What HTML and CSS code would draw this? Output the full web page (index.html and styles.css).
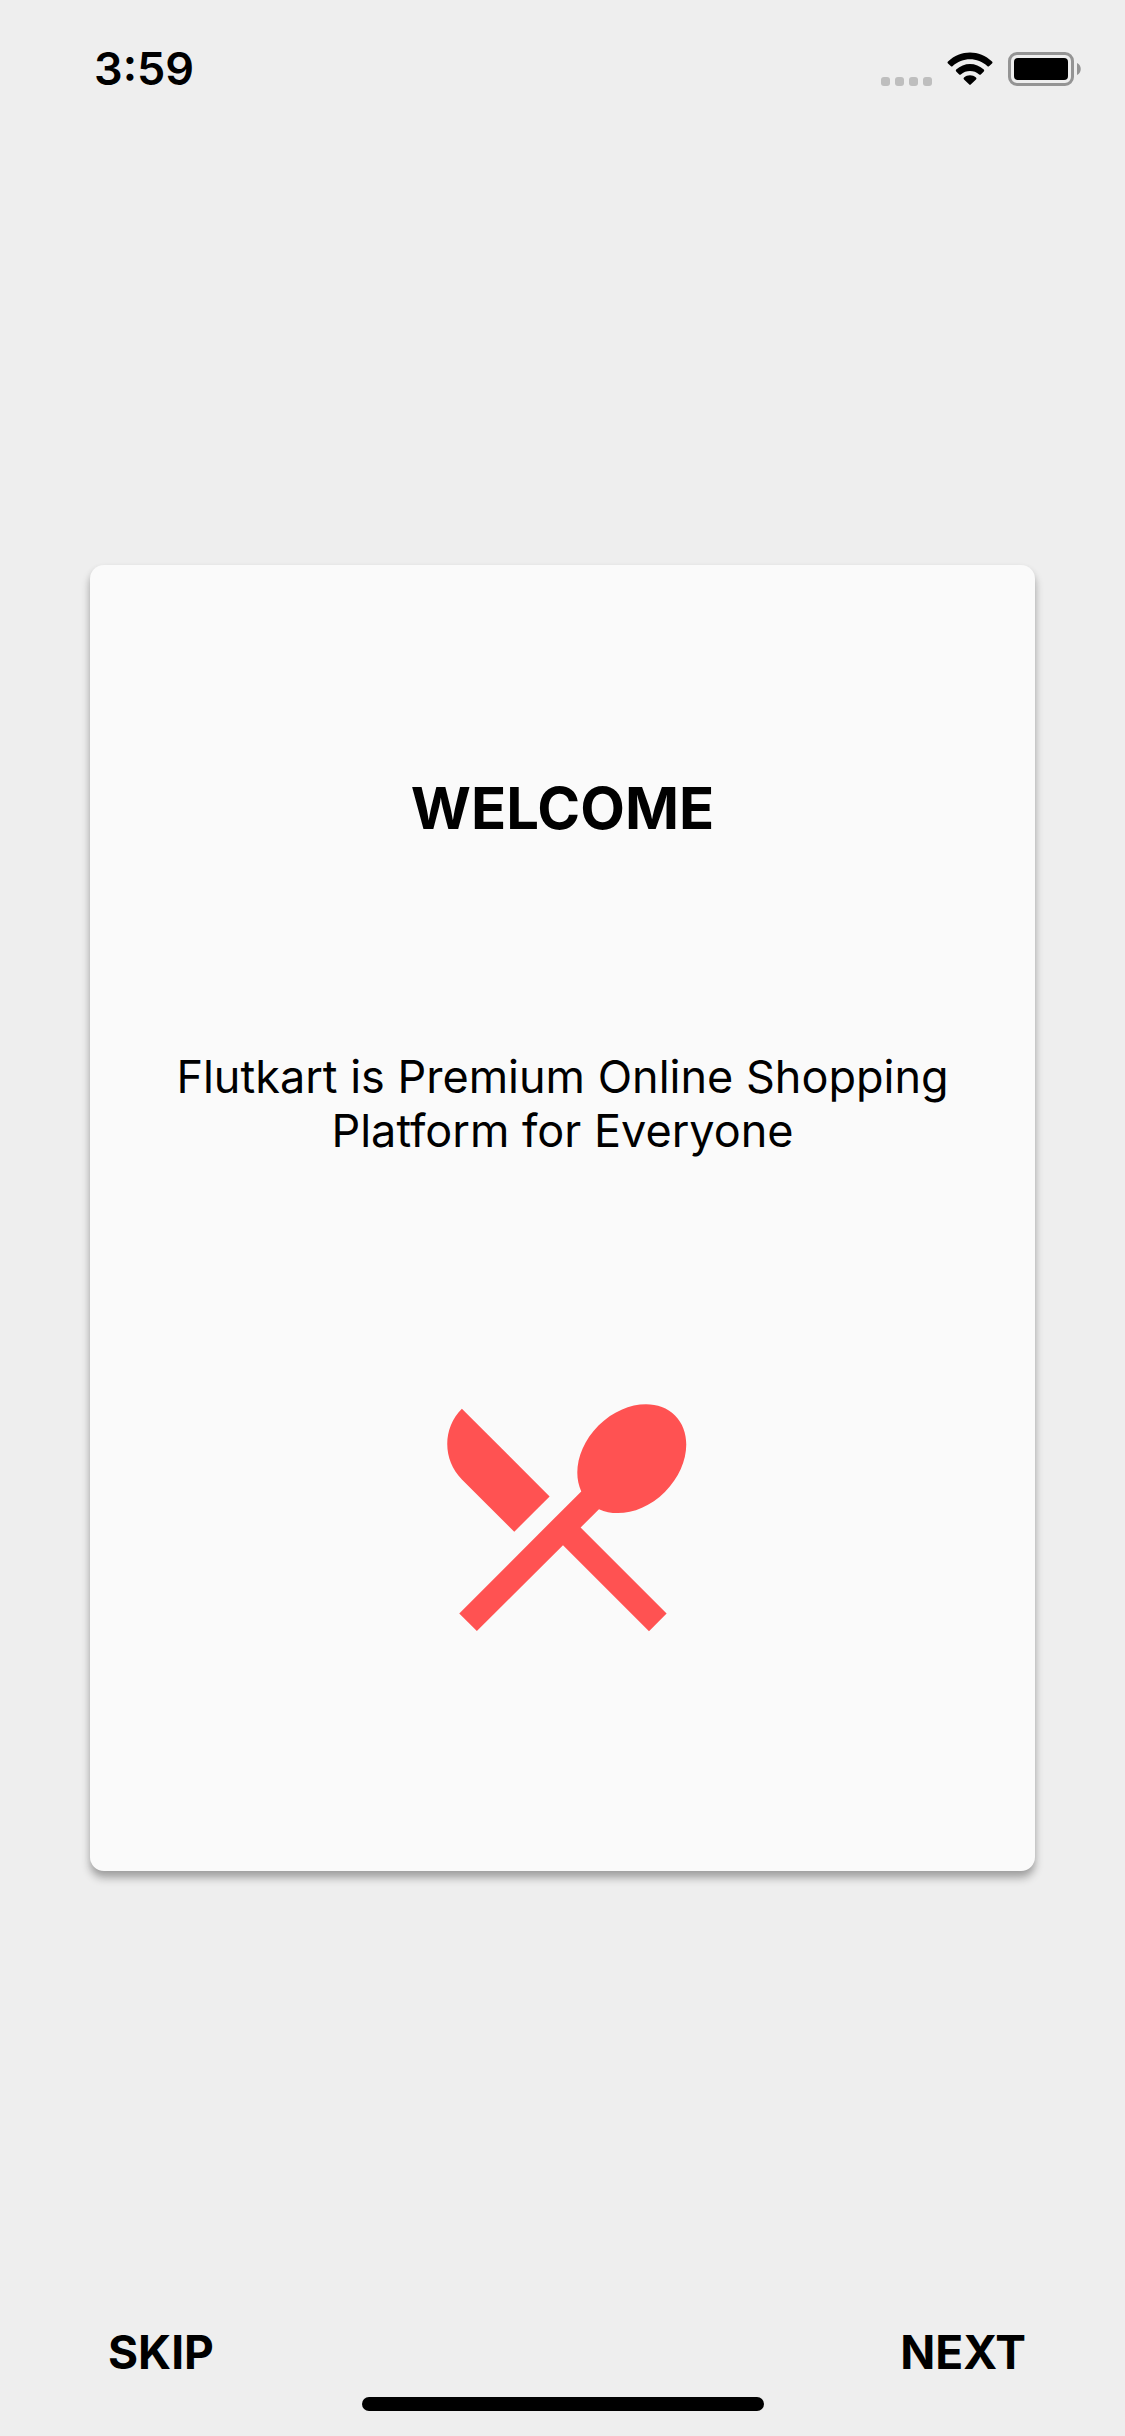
FILE: index.html
```html
<!DOCTYPE html>
<html lang="en">
<head>
<meta charset="utf-8">
<meta name="viewport" content="width=device-width, initial-scale=1">
<title>Flutkart</title>
<link rel="stylesheet" href="styles.css">
</head>
<body class="screen">
  <header class="status-bar">
    <time class="clock">3:59</time>
    <div class="indicators">
      <svg class="signal" viewBox="0 0 51 9" aria-hidden="true">
        <rect width="9" height="9" rx="3"/>
        <rect x="14" width="9" height="9" rx="3"/>
        <rect x="28" width="9" height="9" rx="3"/>
        <rect x="42" width="9" height="9" rx="3"/>
      </svg>
      <svg class="wifi" viewBox="0 0 46 34" aria-hidden="true">
        <path d="M1 9.500C13.500-2.500 32.500-2.500 45 9.500Q46 10.500 45 11.500L42 14.300Q41.300 14.900 40.500 14.200C30.500 5 15.500 5 5.500 14.200Q4.700 14.900 4 14.300L1 11.500Q0 10.500 1 9.500Z"/>
        <path d="M9.200 17.500C17 10 29 10 36.800 17.500Q37.700 18.500 36.800 19.400L33.800 22.400Q33 23 32.200 22.400C27 17.800 19 17.800 13.800 22.400Q13 23 12.200 22.400L9.200 19.400Q8.300 18.500 9.200 17.500Z"/>
        <path d="M17 25.400C20.500 22.400 25.500 22.400 29 25.400Q30 26.400 29 27.400L23.700 32.600Q23 33.300 22.300 32.600L17 27.400Q16 26.400 17 25.400Z"/>
      </svg>
      <svg class="battery" viewBox="0 0 73 34" aria-hidden="true">
        <rect class="battery-shell" x="1.500" y="1.500" width="63" height="31" rx="7.500"/>
        <rect x="6" y="6" width="54" height="22" rx="4"/>
        <path class="battery-cap" d="M69 11C74 13 74 21 69 23Z"/>
      </svg>
    </div>
  </header>

  <main class="stage">
    <section class="card">
      <h1 class="card-title">WELCOME</h1>
      <p class="card-text">Flutkart is Premium Online Shopping Platform for Everyone</p>
      <svg class="card-icon" viewBox="0 0 24 24" aria-hidden="true">
        <path d="M8.100 13.340l2.830-2.830L3.910 3.500c-1.560 1.560-1.560 4.090 0 5.660l4.190 4.180zm6.780-1.810c1.530.71 3.680.21 5.270-1.380 1.910-1.910 2.280-4.650.81-6.120-1.460-1.460-4.200-1.100-6.120.81-1.590 1.590-2.090 3.740-1.380 5.270L3.700 19.870l1.410 1.410L12 14.410l6.880 6.880 1.410-1.410L13.410 13l1.470-1.470z"/>
      </svg>
    </section>
  </main>

  <footer class="footer">
    <nav class="actions">
      <button class="action" type="button">SKIP</button>
      <button class="action" type="button">NEXT</button>
    </nav>
    <div class="home-indicator"></div>
  </footer>
</body>
</html>
```
FILE: styles.css
```css
* {
  box-sizing: border-box;
}

.screen {
  display: flex;
  flex-direction: column;
  min-height: 100vh;
  margin: 0;
  background: #eee;
  color: #000;
  font-family: Inter, "Liberation Sans", sans-serif;
}

.status-bar {
  display: flex;
  justify-content: space-between;
  height: 132px;
  padding: 42px 44px 0 94px;
}

.clock {
  font-size: 45px;
  font-weight: 600;
  line-height: 54px;
}

.indicators {
  display: flex;
  align-items: flex-end;
  gap: 15px;
  height: 44px;
}

.signal {
  width: 51px;
  height: 9px;
  fill: #bebebe;
}

.wifi {
  width: 46px;
  height: 34px;
}

.battery {
  width: 73px;
  height: 34px;
}

.battery-shell {
  fill: none;
  stroke: #949494;
  stroke-width: 3;
}

.battery-cap {
  fill: #949494;
}

.stage {
  display: flex;
  flex: 1;
  align-items: center;
  justify-content: center;
}

.card {
  display: flex;
  flex-direction: column;
  align-items: center;
  justify-content: space-evenly;
  width: 84%;
  aspect-ratio: 945 / 1306;
  padding: 0 64px;
  border-radius: 14px;
  background: #fafafa;
  box-shadow: 0 7px 8px rgba(0, 0, 0, 0.3), 0 2px 6px rgba(0, 0, 0, 0.06);
}

.card-title {
  margin: 0;
  font-size: 58px;
  font-weight: 700;
  line-height: 72px;
}

.card-text {
  margin: 0;
  font-size: 45px;
  line-height: 54px;
  text-align: center;
}

.card-icon {
  width: 300px;
  height: 300px;
  fill: #ff5252;
}

.footer {
  display: flex;
  flex-direction: column;
  align-items: center;
  gap: 17px;
  padding: 20px 0 25px;
}

.actions {
  display: flex;
  justify-content: space-between;
  width: 100%;
  padding: 0 99px 0 108px;
}

.action {
  padding: 0;
  border: 0;
  background: none;
  color: inherit;
  font: 700 46px/56px Inter, "Liberation Sans", sans-serif;
}

.home-indicator {
  width: 402px;
  height: 14px;
  border-radius: 7px;
  background: #000;
}
```
